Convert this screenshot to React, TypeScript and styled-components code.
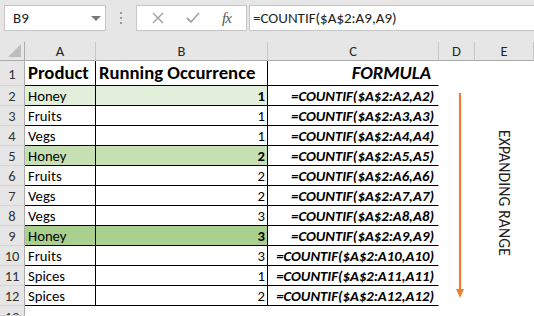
import styled, { createGlobalStyle } from "styled-components";

const GlobalStyle = createGlobalStyle`
  body {
    margin: 0;
    background: #ffffff;
    font-family: Carlito, Lato, "Liberation Sans", sans-serif;
  }
`;

const Page = styled.div`
  width: 534px;
  height: 316px;
  overflow: hidden;
  background: #ffffff;
  position: relative;
`;

const FormulaBar = styled.div`
  display: flex;
  align-items: flex-start;
  height: 42px;
  box-sizing: border-box;
  padding: 5px 0 0 4px;
  background: #e6e6e6;
`;

const Box = styled.div`
  height: 26px;
  box-sizing: border-box;
  background: #ffffff;
  border: 1px solid #c6c6c6;
  display: flex;
  align-items: center;
`;

const NameBox = styled(Box)`
  width: 102px;
  padding: 0 4px 0 8px;
  justify-content: space-between;
  font-size: 15px;
  color: #222;
`;

const DropArrow = styled.span`
  width: 0;
  height: 0;
  border-left: 5px solid transparent;
  border-right: 5px solid transparent;
  border-top: 5px solid #7a7a7a;
`;

const Grip = styled.div`
  width: 30px;
  height: 26px;
  display: flex;
  flex-direction: column;
  align-items: center;
  justify-content: center;
  gap: 3px;
  span {
    width: 2px;
    height: 2px;
    background: #9a9a9a;
  }
`;

const FxBox = styled(Box)`
  width: 111px;
  justify-content: space-around;
  padding: 0 4px;
  svg {
    display: block;
  }
`;

const FxLabel = styled.span`
  font-family: "Liberation Serif", serif;
  font-style: italic;
  font-size: 15px;
  color: #555;
  letter-spacing: -1px;
`;

const FormulaInput = styled(Box)`
  flex: 1;
  margin-left: 2px;
  border-right: none;
  padding-left: 3px;
  font-size: 15px;
  color: #222;
`;

const Sheet = styled.div`
  display: grid;
  grid-template-columns: 25px 71px 172px 171px 36px 1fr;
  grid-template-rows: 19px 25px repeat(11, 20px) 10px;
  font-size: 14.7px;
  color: #000;
`;

const Corner = styled.div`
  background: #e6e6e6;
  border-right: 1px solid #ababab;
  border-bottom: 1px solid #ababab;
  position: relative;
  &::after {
    content: "";
    position: absolute;
    right: 3px;
    bottom: 3px;
    border-left: 13px solid transparent;
    border-bottom: 13px solid #bdbdbd;
  }
`;

const ColHead = styled.div`
  background: #e6e6e6;
  border-right: 1px solid #c8c8c8;
  border-bottom: 1px solid #ababab;
  display: flex;
  align-items: center;
  justify-content: center;
  font-size: 14.5px;
  color: #262626;
`;

const RowHead = styled.div<{ $cut?: boolean }>`
  background: #e6e6e6;
  border-right: 1px solid #ababab;
  border-bottom: 1px solid #d4d4d4;
  display: flex;
  align-items: ${(p) => (p.$cut ? "flex-start" : "center")};
  justify-content: center;
  font-size: 14.5px;
  line-height: ${(p) => (p.$cut ? "14px" : "normal")};
  color: #333;
  padding-top: ${(p) => (p.$cut ? 4 : 1)}px;
  overflow: hidden;
`;

const Cell = styled.div<{
  $fill?: string;
  $edge?: boolean;
  $line?: boolean;
  $align?: "left" | "right";
  $bold?: boolean;
  $italic?: boolean;
  $big?: boolean;
  $pad?: number;
}>`
  background: ${(p) => p.$fill || "#ffffff"};
  border-right: 1px solid ${(p) => (p.$edge ? "#000" : "transparent")};
  border-bottom: 1px solid ${(p) => (p.$line ? "#000" : "transparent")};
  display: flex;
  align-items: flex-end;
  justify-content: ${(p) => (p.$align === "right" ? "flex-end" : "flex-start")};
  padding: 0 ${(p) => (p.$align === "right" ? p.$pad ?? 2 : 0)}px 1px
    ${(p) => (p.$align === "right" ? 0 : p.$pad ?? 3)}px;
  font-weight: ${(p) => (p.$bold ? 700 : 400)};
  font-style: ${(p) => (p.$italic ? "italic" : "normal")};
  font-size: ${(p) => (p.$big ? "18.7px" : "14.7px")};
  white-space: nowrap;
  overflow: visible;
  line-height: 1.1;
`;

const Arrow = styled.svg`
  position: absolute;
  left: 455px;
  top: 93px;
`;

const SideLabel = styled.div`
  position: absolute;
  left: 495px;
  top: 130px;
  writing-mode: vertical-rl;
  font-size: 15.5px;
  letter-spacing: 0.2px;
  color: #222;
`;

const fills = ["", "#e2efda", "#c6e0b4", "#a9d08e"];

const rows: { product: string; count: number; shade: number }[] = [
  { product: "Honey", count: 1, shade: 1 },
  { product: "Fruits", count: 1, shade: 0 },
  { product: "Vegs", count: 1, shade: 0 },
  { product: "Honey", count: 2, shade: 2 },
  { product: "Fruits", count: 2, shade: 0 },
  { product: "Vegs", count: 2, shade: 0 },
  { product: "Vegs", count: 3, shade: 0 },
  { product: "Honey", count: 3, shade: 3 },
  { product: "Fruits", count: 3, shade: 0 },
  { product: "Spices", count: 1, shade: 0 },
  { product: "Spices", count: 2, shade: 0 },
];

export default function App() {
  return (
    <Page>
      <GlobalStyle />
      <FormulaBar>
        <NameBox>
          B9
          <DropArrow />
        </NameBox>
        <Grip>
          <span />
          <span />
          <span />
        </Grip>
        <FxBox>
          <svg width="12" height="12" viewBox="0 0 12 12">
            <path d="M1 1L11 11M11 1L1 11" stroke="#a6a6a6" strokeWidth="1.5" />
          </svg>
          <svg width="14" height="12" viewBox="0 0 14 12">
            <path d="M1 6L5 10L13 1" stroke="#a6a6a6" strokeWidth="1.8" fill="none" />
          </svg>
          <FxLabel>fx</FxLabel>
        </FxBox>
        <FormulaInput>=COUNTIF($A$2:A9,A9)</FormulaInput>
      </FormulaBar>

      <Sheet>
        <Corner />
        {["A", "B", "C", "D", "E"].map((c) => (
          <ColHead key={c}>{c}</ColHead>
        ))}

        <RowHead>1</RowHead>
        <Cell $edge $line $bold $big>
          Product
        </Cell>
        <Cell $edge $line $bold $big>
          Running Occurrence
        </Cell>
        <Cell $line $bold $italic $big $align="right" $pad={7}>
          FORMULA
        </Cell>
        <Cell />
        <Cell />

        {rows.map((r, i) => {
          const n = i + 2;
          const fill = fills[r.shade];
          return [
            <RowHead key={`h${n}`}>{n}</RowHead>,
            <Cell key={`a${n}`} $edge $line $fill={fill}>
              {r.product}
            </Cell>,
            <Cell key={`b${n}`} $edge $line $fill={fill} $align="right" $bold={r.shade > 0}>
              {r.count}
            </Cell>,
            <Cell key={`c${n}`} $line $bold $italic $align="right" $pad={4}>
              =COUNTIF($A$2:A{n},A{n})
            </Cell>,
            <Cell key={`d${n}`} />,
            <Cell key={`e${n}`} />,
          ];
        })}

        <RowHead $cut>13</RowHead>
        <Cell />
        <Cell />
        <Cell />
        <Cell />
        <Cell />
      </Sheet>

      <Arrow width="10" height="206" viewBox="0 0 10 206">
        <line x1="5" y1="0" x2="5" y2="198" stroke="#ed7d31" strokeWidth="2.2" />
        <polygon points="1,196 9,196 5,205" fill="#ed7d31" />
      </Arrow>
      <SideLabel>EXPANDING RANGE</SideLabel>
    </Page>
  );
}
